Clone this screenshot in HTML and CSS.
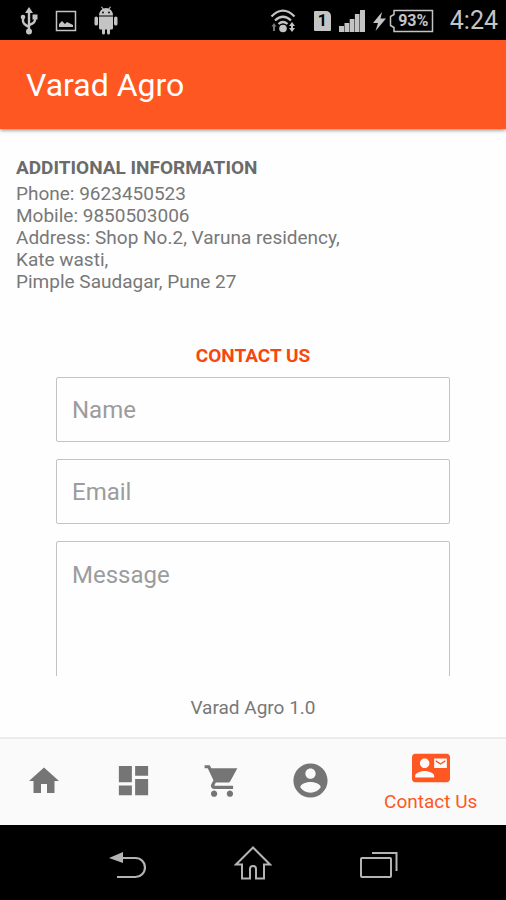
FILE: index.html
```html
<!DOCTYPE html>
<html lang="en">
<head>
<meta charset="utf-8">
<meta name="viewport" content="width=device-width, initial-scale=1">
<title>Varad Agro</title>
<link rel="stylesheet" href="styles.css">
</head>
<body>
<div class="app">
  <div class="status">
    <div class="status-left">
      <svg width="18" height="30" viewBox="0 0 18 30" fill="none" stroke="currentColor" stroke-width="2.400"><path d="M9 5v20M3 10v5q0 3 6 6M15 10v4q0 3-6 5"/><path d="M9 1l4 6H5z" fill="currentColor" stroke="none"/><circle cx="9" cy="25.500" r="3" fill="currentColor" stroke="none"/><circle cx="3" cy="11" r="2.300" fill="currentColor" stroke="none"/><path d="M12.500 8.500h5v5h-5z" fill="currentColor" stroke="none"/></svg>
      <svg width="22" height="22" viewBox="0 0 22 22"><path d="M1.500 1.500h19v19h-19z" fill="none" stroke="currentColor" stroke-width="1.500"/><path d="M4 17v-3l3-3 3 3 2-2 2 1 4 2v2z" fill="currentColor"/></svg>
      <svg width="24" height="30" viewBox="0 0 24 30" fill="currentColor"><path d="M5 9.500q0-4.500 3.500-6.500L7 1l.8-.6L9.600 2.500q2.400-.8 4.800 0L16.200.4 17 1l-1.500 2q3.500 2 3.500 6.500zM5 10.500h14V22q0 1.500-1.500 1.500H16V27q0 1.500-1.500 1.500T13 27v-3.500h-2V27q0 1.500-1.500 1.500T8 27v-3.500H6.500Q5 23.500 5 22zM.5 12q0-1.500 1.700-1.500T4 12v6q0 1.500-1.800 1.500T.5 18zM20 12q0-1.500 1.800-1.500T23.500 12v6q0 1.500-1.700 1.500T20 18z"/><circle cx="9" cy="6.500" r=".9" fill="#000"/><circle cx="15" cy="6.500" r=".9" fill="#000"/></svg>
    </div>
    <div class="status-right">
      <svg class="wifi" width="26" height="24" viewBox="0 0 26 24" fill="none" stroke="currentColor" stroke-width="2.200"><path d="M1.500 7.500Q13-4 24.500 7.500M5 11.500q8-7.500 16 0M8.500 15q4.500-4 9 0"/><circle cx="13" cy="19.500" r="3.800" fill="currentColor" stroke="none"/><path d="M22 13l3 4h-2v2h2l-3 4-3-4h2v-2h-2z" fill="currentColor" stroke="none"/><path d="M4 14l2.500 3.500H5V22H3v-4.500H1.500z" fill="#777" stroke="none"/></svg>
      <span class="sim">1</span>
      <svg width="26" height="24" viewBox="0 0 26 24" fill="currentColor"><path d="M0 17h5v6H0zM5.500 14h4.700v9H5.500zM10.700 10h4.700v13h-4.700zM15.900 5h4.600v18h-4.600zM21 1h5v22h-5z"/></svg>
      <div class="power">
        <svg width="13" height="20" viewBox="0 0 13 20"><path d="M9 1L0 12h5L2.500 20 13 7.500H7.500z" fill="currentColor"/></svg>
        <span class="battery"><svg class="battery-shell" width="45" height="24" viewBox="0 0 45 24"><path d="M5 1.500h38.500v21H5v-4l-3.500-2v-9l3.500-2z" fill="none" stroke="currentColor" stroke-width="1.500"/></svg><span>93%</span></span>
      </div>
      <time>4:24</time>
    </div>
  </div>

  <header class="appbar"><h1>Varad Agro</h1></header>

  <main class="content">
    <section class="info">
      <h2>ADDITIONAL INFORMATION</h2>
      <p>Phone: 9623450523<br>Mobile: 9850503006<br>Address: Shop No.2, Varuna residency,<br>Kate wasti,<br>Pimple Saudagar, Pune 27</p>
    </section>
    <form class="contact">
      <h2>CONTACT US</h2>
      <input type="text" placeholder="Name" aria-label="Name">
      <input type="email" placeholder="Email" aria-label="Email">
      <textarea placeholder="Message" aria-label="Message"></textarea>
    </form>
  </main>
  <footer class="version">Varad Agro 1.0</footer>

  <nav class="tabs">
    <a href="#" aria-label="Home"><svg width="36" height="36" viewBox="0 0 24 24"><path d="M10 20v-6h4v6h5v-8h3L12 3 2 12h3v8z"/></svg></a>
    <a href="#" aria-label="Dashboard"><svg width="39" height="39" viewBox="0 0 24 24"><path d="M3 13h8V3H3v10zm0 8h8v-6H3v6zm10 0h8V11h-8v10zm0-18v6h8V3h-8z"/></svg></a>
    <a href="#" aria-label="Cart"><svg width="38" height="38" viewBox="0 0 24 24"><path d="M7 18c-1.100 0-1.990.9-1.990 2S5.900 22 7 22s2-.9 2-2-.9-2-2-2zM1 2v2h2l3.600 7.590-1.350 2.450c-.16.280-.25.610-.25.960 0 1.100.9 2 2 2h12v-2H7.420c-.14 0-.25-.11-.25-.25l.03-.12.9-1.630h7.450c.75 0 1.410-.41 1.750-1.030L21.700 4H5.210l-.94-2H1zm16 16c-1.100 0-1.990.9-1.990 2s.89 2 1.990 2 2-.9 2-2-.9-2-2-2z"/></svg></a>
    <a href="#" aria-label="Account"><svg width="41" height="41" viewBox="0 0 24 24"><path d="M12 2C6.480 2 2 6.480 2 12s4.480 10 10 10 10-4.480 10-10S17.520 2 12 2zm0 3c1.660 0 3 1.340 3 3s-1.340 3-3 3-3-1.340-3-3 1.340-3 3-3zm0 14.200c-2.500 0-4.710-1.280-6-3.220.03-1.990 4-3.080 6-3.080 1.990 0 5.970 1.090 6 3.080-1.290 1.940-3.500 3.220-6 3.220z"/></svg></a>
    <a href="#" class="active" aria-current="page"><svg width="38" height="38" viewBox="0 0 24 24"><path d="M21 8V7l-3 2-3-2v1l3 2 3-2zm1-5H2C.9 3 0 3.900 0 5v14c0 1.100.9 2 2 2h20c1.100 0 1.990-.9 1.990-2L24 5c0-1.100-.9-2-2-2zM8 6c1.660 0 3 1.340 3 3s-1.340 3-3 3-3-1.340-3-3 1.340-3 3-3zm6 12H2v-1c0-2 4-3.100 6-3.100s6 1.100 6 3.100v1zm8-6h-8V6h8v6z"/></svg><span>Contact Us</span></a>
  </nav>

  <div class="sysnav">
    <button type="button" aria-label="Back"><svg width="38" height="36" viewBox="0 0 38 36"><path d="M14 12h13.500a9.500 9.500 0 0 1 0 19H9" fill="none" stroke="currentColor" stroke-width="2.200"/><path d="M1 12l14-6v11z" fill="currentColor"/></svg></button>
    <button type="button" aria-label="Home screen"><svg width="38" height="36" viewBox="0 0 38 36" fill="none" stroke="currentColor" stroke-width="2"><path d="M19 1.500L2 18.500h6V32.500h8V23q0-3 3-3t3 3v9.500h8V18.500h6z"/></svg></button>
    <button type="button" aria-label="Recent apps"><svg width="38" height="36" viewBox="0 0 38 36" fill="none" stroke="currentColor" stroke-width="2"><rect x="1" y="12" width="30" height="19" rx="1"/><path d="M12 7h24.500v18"/></svg></button>
  </div>
</div>
</body>
</html>
```
FILE: styles.css
```css
* { box-sizing: border-box; }
body {
  margin: 0;
  font-family: Roboto, "Liberation Sans", sans-serif;
  color: #787878;
  background: #fefefe;
}
h1, h2, p { margin: 0; }
svg { display: block; flex: none; }

.app {
  display: flex;
  flex-direction: column;
  height: 100vh;
}

.status {
  display: flex;
  justify-content: space-between;
  align-items: center;
  height: 40px;
  flex: none;
  padding: 1px 8px 0 20px;
  background: #000;
  color: #c4c4c4;
}
.status-left, .status-right, .power { display: flex; align-items: center; }
.status-left { gap: 17px; }
.status-right { gap: 8px; }
.wifi { margin-right: 10px; }
.sim {
  width: 17px;
  height: 20px;
  background: #c4c4c4;
  color: #000;
  border-radius: 1px 5px 1px 1px;
  font: bold 16px/20px Roboto, sans-serif;
  text-align: center;
}
.power { gap: 3px; }
.battery {
  position: relative;
  width: 45px;
  padding-left: 4px;
  font-size: 16px;
  font-weight: bold;
  line-height: 24px;
  text-align: center;
}
.battery-shell { position: absolute; top: 0; left: 0; }
.status time { margin-left: 8px; font-size: 25px; line-height: 40px; }

.appbar {
  position: relative;
  flex: none;
  padding: 25px 26px 23px;
  background: #ff5722;
  color: #fff;
  box-shadow: 0 1px 4px rgba(0, 0, 0, .5);
}
.appbar h1 { font-size: 32px; font-weight: 400; line-height: 41px; }

.content { flex: 1; min-height: 0; overflow: hidden; }
.info {
  padding: 26px 16px 0;
  font-size: 19px;
  line-height: 22px;
}
h2 { font-size: 19px; font-weight: 700; line-height: 26px; }
.info h2 { margin-bottom: 2px; color: #6b6b6b; }

.contact {
  display: flex;
  flex-direction: column;
  gap: 17px;
  padding: 50px 56px 0;
}
.contact h2 {
  margin-bottom: -9px;
  color: #f8460f;
  text-align: center;
}
.contact input, .contact textarea {
  display: block;
  width: 100%;
  height: 65px;
  margin: 0;
  padding: 0 15px;
  border: 1px solid #c3c3c3;
  border-radius: 2px;
  background: #fefefe;
  color: #555;
  font: 24px/32px Roboto, sans-serif;
}
.contact textarea { height: 160px; padding: 17px 15px; resize: none; }
.contact ::placeholder { color: #9c9c9c; opacity: 1; }

.version {
  flex: none;
  padding: 20px 0 17px;
  font-size: 19px;
  line-height: 24px;
  text-align: center;
}

.tabs {
  display: flex;
  flex: none;
  height: 88px;
  padding-bottom: 3px;
  border-top: 2px solid #ececec;
  background: #fafafa;
}
.tabs a {
  display: flex;
  flex: 89 1 0;
  flex-direction: column;
  align-items: center;
  justify-content: center;
  color: #757575;
  text-decoration: none;
}
.tabs svg { fill: currentColor; }
.tabs .active { flex-grow: 151; padding-top: 4px; color: #ff5722; }
.tabs span { font-size: 19px; line-height: 30px; }

.sysnav {
  display: flex;
  flex: none;
  height: 75px;
  padding: 3px 12.6% 0;
  background: #000;
}
.sysnav button {
  display: flex;
  flex: 1;
  align-items: center;
  justify-content: center;
  padding: 0;
  border: 0;
  background: none;
  color: #b4b4b4;
}
```
